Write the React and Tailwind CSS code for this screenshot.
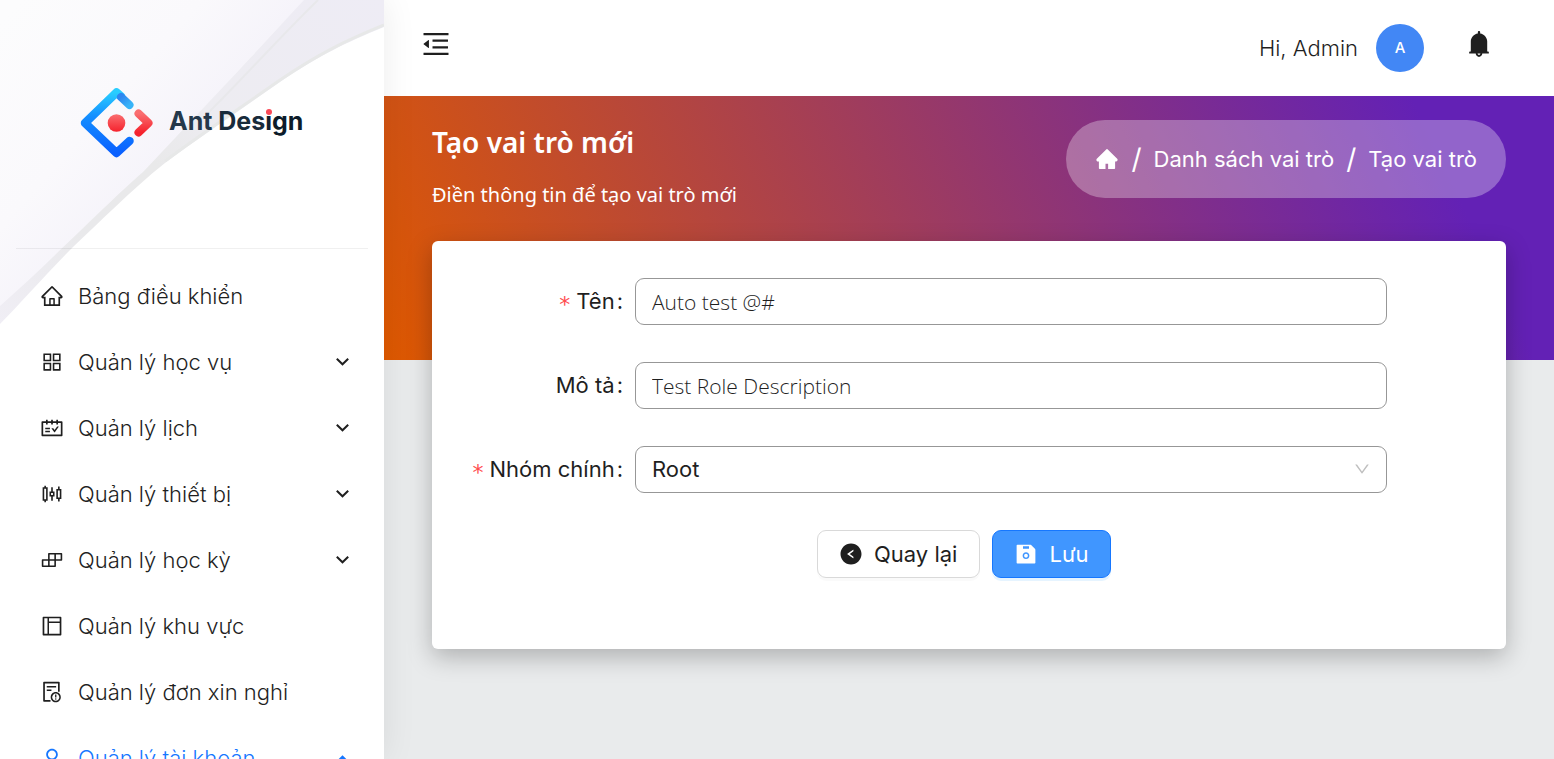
import {
  AiOutlineHome, AiOutlineAppstore, AiOutlineSchedule, AiOutlineSliders, AiOutlineBuild,
  AiOutlineLayout, AiOutlineException, AiOutlineUser, AiOutlineMenuFold, AiOutlineDown,
  AiFillHome, AiFillBell, AiFillLeftCircle, AiFillSave,
} from "react-icons/ai";

const items = [
  { label: "Bảng điều khiển", Icon: AiOutlineHome },
  { label: "Quản lý học vụ", Icon: AiOutlineAppstore, sub: true },
  { label: "Quản lý lịch", Icon: AiOutlineSchedule, sub: true },
  { label: "Quản lý thiết bị", Icon: AiOutlineSliders, sub: true },
  { label: "Quản lý học kỳ", Icon: AiOutlineBuild, sub: true },
  { label: "Quản lý khu vực", Icon: AiOutlineLayout },
  { label: "Quản lý đơn xin nghỉ", Icon: AiOutlineException },
  { label: "Quản lý tài khoản", Icon: AiOutlineUser, sub: true, open: true },
];

function Waves() {
  return (
    <svg className="absolute left-0 top-0 h-[330px] w-full" viewBox="0 0 384 330" preserveAspectRatio="none" aria-hidden="true">
      <defs>
        <linearGradient id="veil" gradientUnits="userSpaceOnUse" x1="20" y1="0" x2="190" y2="150">
          <stop offset="0" stopColor="#fcfcfd" />
          <stop offset="0.6" stopColor="#faf9fc" />
          <stop offset="1" stopColor="#f5f3fa" />
        </linearGradient>
        <linearGradient id="fold" x1="1" y1="0" x2="0" y2="1">
          <stop offset="0" stopColor="#eeecf5" />
          <stop offset="0.4" stopColor="#edecf1" />
          <stop offset="0.55" stopColor="#e9e9ea" />
          <stop offset="0.75" stopColor="#e9e9eb" />
          <stop offset="1" stopColor="#f0eef5" />
        </linearGradient>
      </defs>
      <path d="M0 0H305C285 20 268 39 250 58C215 96 175 140 150 165C100 217 50 270 0 316Z" fill="url(#veil)" />
      <path d="M304 0H384V27C345 43 320 55 280 82C240 110 200 137 165 163C130 191 100 222 73 247C45 275 20 304 0 324V306C50 262 105 205 143 172C175 138 215 96 250 58C268 39 285 20 304 0Z" fill="url(#fold)" />
      <path d="M318 0C275 42 240 82 205 116" fill="none" stroke="#e8e8eb" strokeWidth="2" />
      <path d="M384 25C345 41 320 53 280 80C240 108 200 135 165 161" fill="none" stroke="#e7e8e8" strokeWidth="3" />
    </svg>
  );
}

function Logo() {
  return (
    <svg className="h-[70px] w-[73px]" viewBox="0 0 73 70" fill="none" strokeLinecap="round" strokeLinejoin="round" aria-hidden="true">
      <defs>
        <linearGradient id="blue" x1="0" y1="0" x2="0" y2="1">
          <stop offset="0" stopColor="#29cdff" />
          <stop offset="0.4" stopColor="#148eff" />
          <stop offset="1" stopColor="#0a60ff" />
        </linearGradient>
        <linearGradient id="tip" x1="0" y1="0" x2="1" y2="1">
          <stop offset="0" stopColor="#2e86f0" />
          <stop offset="1" stopColor="#38b4f8" />
        </linearGradient>
        <linearGradient id="red" x1="0" y1="0" x2="0" y2="1">
          <stop offset="0" stopColor="#fa6e70" />
          <stop offset="1" stopColor="#f5222d" />
        </linearGradient>
      </defs>
      <path d="M41 8.500L36.500 4.500L5 35L36.500 65L49.500 53" stroke="url(#blue)" strokeWidth="8.500" />
      <path d="M41 9L49.500 17" stroke="url(#tip)" strokeWidth="8" />
      <path d="M58.500 25.500L68.500 35L58.500 44.500" stroke="url(#red)" strokeWidth="8" />
      <circle cx="36.500" cy="35" r="8.800" fill="url(#red)" />
    </svg>
  );
}

function Sidebar() {
  return (
    <aside className="relative z-10 h-full w-96 shrink-0 overflow-hidden bg-white shadow-[0_0_32px_rgba(0,0,0,0.08)]">
      <Waves />
      <div className="relative px-4">
        <a href="#" className="flex h-[248px] items-start gap-4 pl-16 pt-[88px]">
          <Logo />
          <span className="font-['Inter'] text-[25px]/[66px] font-bold text-[#24384b]">
            Ant <span className="text-[#182b3b]">Des</span>
            <span className="relative text-[#11212f]">i<span className="absolute left-[1px] top-[3px] size-1.5 rounded-full bg-[#fa4a58]" /></span>
            <span className="text-[#0d1c2a]">gn</span>
          </span>
        </a>
        <div className="h-px bg-black/[0.06]" />
      </div>
      <nav className="relative mt-[17px] flex flex-col gap-1.5 px-1.5">
        {items.map(({ label, Icon, sub, open }) => (
          <a
            key={label}
            href="#"
            className={`flex h-[60px] items-center gap-3.5 pl-[34px] pr-[29px] text-[22px] font-light ${open ? "text-[#1677ff]" : "text-[#1f1f1f]"}`}
          >
            <Icon className="size-6 shrink-0" />
            <span className="grow whitespace-nowrap">{label}</span>
            {sub && (
              <svg className={`size-[13px] ${open ? "rotate-180" : ""}`} viewBox="0 0 13 13" fill="none" stroke="currentColor" strokeWidth="2" aria-hidden="true">
                <path d="M0.800 2.700L6.500 8.300L12.200 2.700" />
              </svg>
            )}
          </a>
        ))}
      </nav>
    </aside>
  );
}

function Row({ id, label, required, children }) {
  return (
    <div className="flex items-center gap-3">
      <label htmlFor={id} className="flex w-[179px] shrink-0 items-center justify-end gap-1.5 whitespace-nowrap text-[22px]">
        {required && <span className="pt-1.5 font-['DejaVu_Sans'] text-[22px]/[22px] text-[#ff4d4f]">*</span>}
        <span>{label}<span className="ml-[2px]">:</span></span>
      </label>
      {children}
    </div>
  );
}

const field = "w-full rounded-[9px] border border-[#979797] bg-white px-4 text-[#1f1f1f] outline-none";
const input = `${field} h-[47px] font-['Open_Sans'] text-[21px] font-light`;

export default function App() {
  return (
    <div className="flex h-screen overflow-hidden bg-[#e9ebec] font-['Inter',sans-serif] text-[#1f1f1f]">
      <Sidebar />
      <div className="flex min-w-0 grow flex-col">
        <header className="flex h-24 shrink-0 items-center bg-white pl-9 pr-[60px]">
          <button type="button" aria-label="Menu" className="pb-2"><AiOutlineMenuFold className="size-8" /></button>
          <span className="ml-auto text-[22px] font-light">Hi, Admin</span>
          <span className="ml-[18px] flex size-12 items-center justify-center rounded-full bg-[#4287f5] text-[15px] font-medium text-white">A</span>
          <button type="button" aria-label="Thông báo" className="ml-10 pb-2"><AiFillBell className="size-[30px]" /></button>
        </header>
        <main>
          <div className="h-[264px] bg-[linear-gradient(65deg,#df5900_0%,#6321b5_89%)] px-12 pt-6">
            <div className="flex items-start justify-between">
              <div className="font-['Noto_Sans'] text-white">
                <h1 className="text-[28px]/[45px] font-semibold">Tạo vai trò mới</h1>
                <p className="mt-3 text-[20px]/[36px]">Điền thông tin để tạo vai trò mới</p>
              </div>
              <nav aria-label="Breadcrumb" className="flex h-[78px] items-center gap-3 rounded-full bg-white/30 px-[29px] text-[22px] text-white">
                <a href="#" aria-label="Trang chủ"><AiFillHome className="size-6" /></a>
                <span className="text-[28px]">/</span>
                <a href="#">Danh sách vai trò</a>
                <span className="text-[28px]">/</span>
                <span>Tạo vai trò</span>
              </nav>
            </div>
          </div>
          <form className="relative mx-12 -mt-[119px] flex h-[408px] flex-col gap-[37px] rounded-md bg-white pl-3 pr-[119px] pt-[37px] shadow-[0_8px_24px_rgba(0,0,0,0.25)]">
            <Row id="name" label="Tên" required>
              <input id="name" defaultValue="Auto test @#" className={input} />
            </Row>
            <Row id="desc" label="Mô tả">
              <input id="desc" defaultValue="Test Role Description" className={input} />
            </Row>
            <Row id="group" label="Nhóm chính" required>
              <div className="relative w-full">
                <select id="group" className={`${field} block h-[47px] appearance-none text-[22px]`}>
                  <option>Root</option>
                </select>
                <AiOutlineDown className="pointer-events-none absolute right-4 top-3.5 size-[18px] text-[#bfbfbf]" />
              </div>
            </Row>
            <div className="ml-[373px] flex gap-3 text-[22px]">
              <button type="button" className="flex h-12 items-center gap-[11px] rounded-[9px] border border-[#d9d9d9] px-[21px] pr-[22px] shadow-[0_3px_0_rgba(0,0,0,0.02)]">
                <AiFillLeftCircle className="size-6" />Quay lại
              </button>
              <button type="submit" className="flex h-12 items-center gap-[11px] rounded-[9px] border border-[#1677ff] bg-[#4096ff] px-[21px] text-white shadow-[0_3px_0_rgba(5,145,255,0.1)]">
                <AiFillSave className="size-6" />Lưu
              </button>
            </div>
          </form>
        </main>
      </div>
    </div>
  );
}
